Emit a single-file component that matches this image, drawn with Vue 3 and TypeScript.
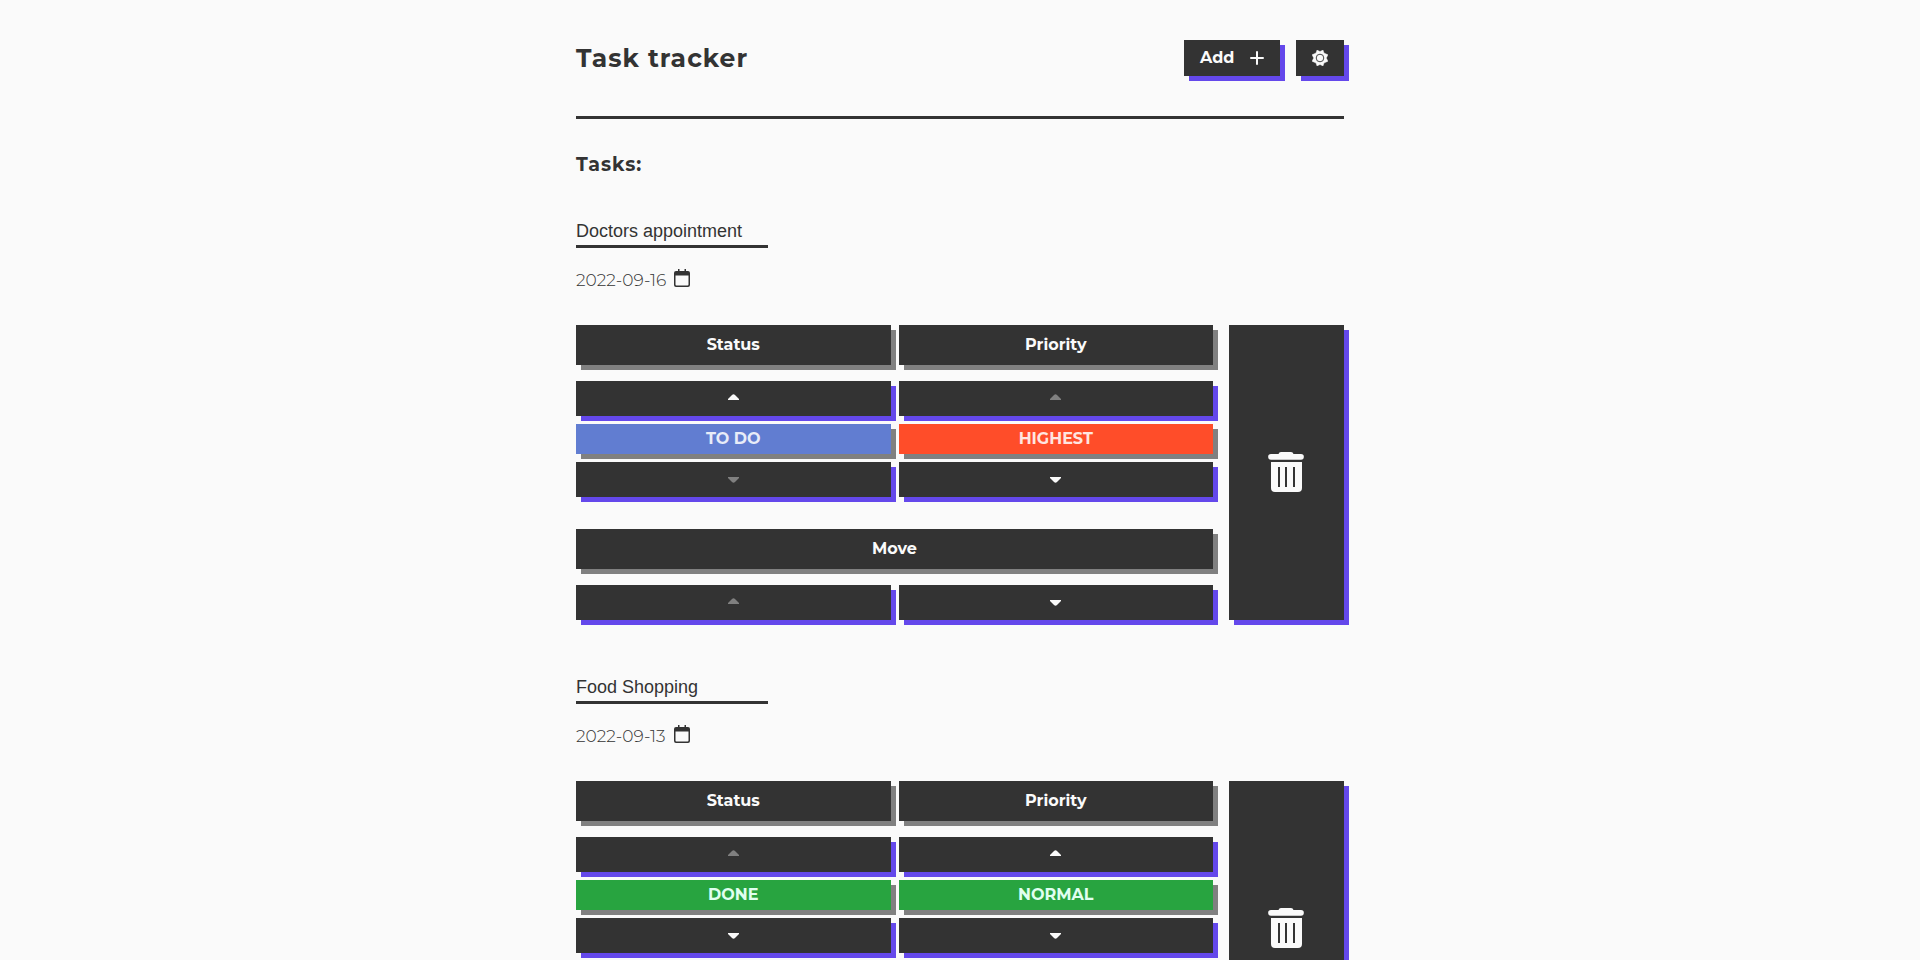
<script setup lang="ts">
import { reactive } from 'vue'

interface Level {
  label: string
  tone: string
}

interface Task {
  id: number
  title: string
  date: string
  status: Level
  priority: Level
  statusUp: boolean
  statusDown: boolean
  priorityUp: boolean
  priorityDown: boolean
}

const tasks = reactive<Task[]>([
  {
    id: 1,
    title: 'Doctors appointment',
    date: '2022-09-16',
    status: { label: 'TO DO', tone: 'blue' },
    priority: { label: 'HIGHEST', tone: 'red' },
    statusUp: true,
    statusDown: false,
    priorityUp: false,
    priorityDown: true,
  },
  {
    id: 2,
    title: 'Food Shopping',
    date: '2022-09-13',
    status: { label: 'DONE', tone: 'green' },
    priority: { label: 'NORMAL', tone: 'green' },
    statusUp: false,
    statusDown: true,
    priorityUp: true,
    priorityDown: true,
  },
])

const UP = 'M0 6V5L4 1Q5.500 -.5 7 1L11 5V6Z'
const DOWN = 'M0 2V3L4 7Q5.500 8.500 7 7L11 3V2Z'

function move(index: number, step: number): void {
  const [task] = tasks.splice(index, 1)
  tasks.splice(index + step, 0, task)
}

function remove(index: number): void {
  tasks.splice(index, 1)
}
</script>

<template>
  <div class="page">
    <header class="header">
      <h1>Task tracker</h1>
      <div class="actions">
        <button type="button" class="btn add">
          Add
          <svg width="14" height="14" viewBox="0 0 14 14" aria-hidden="true">
            <path d="M7 1v12M1 7h12" fill="none" stroke="currentColor" stroke-width="2" stroke-linecap="round" />
          </svg>
        </button>
        <button type="button" class="btn settings" aria-label="Settings">
          <svg width="16" height="16" viewBox="0 0 16 16" aria-hidden="true">
            <path
              d="M5 0 8 1.500 11 0 12 3 16 4.800 14.300 8 16 11.200 12 13 11 16 8 14.500 5 16 4 13 0 11.200 1.700 8 0 4.800 4 3Z"
              fill="currentColor"
              stroke="currentColor"
              stroke-width=".4"
              stroke-linejoin="round"
            />
            <circle cx="8" cy="8" r="3.800" fill="none" stroke="#333333" stroke-width=".9" />
          </svg>
        </button>
      </div>
    </header>

    <main>
      <h2>Tasks:</h2>
      <article v-for="(task, i) in tasks" :key="task.id" class="task">
        <input v-model="task.title" class="title" type="text" aria-label="Task title" />
        <button type="button" class="date" aria-label="Change date">
          <time :datetime="task.date">{{ task.date }}</time>
          <svg width="16" height="18" viewBox="0 0 16 18" aria-hidden="true">
            <path
              fill-rule="evenodd"
              d="M4 0h1.500v2h5V0H12v2h2q2 0 2 2v12q0 2-2 2H2q-2 0-2-2V4q0-2 2-2h2ZM1.500 6.500v9q0 1 1 1h11q1 0 1-1v-9Z"
              fill="currentColor"
            />
          </svg>
        </button>

        <div class="board">
          <div class="controls">
            <div class="pair">
              <h3 class="heading">Status</h3>
              <h3 class="heading">Priority</h3>
            </div>
            <div class="pair levels">
              <button type="button" class="btn arrow" :disabled="!task.statusUp" aria-label="Raise status">
                <svg width="11" height="9" viewBox="0 0 11 9"><path :d="UP" fill="currentColor" /></svg>
              </button>
              <button type="button" class="btn arrow" :disabled="!task.priorityUp" aria-label="Raise priority">
                <svg width="11" height="9" viewBox="0 0 11 9"><path :d="UP" fill="currentColor" /></svg>
              </button>
              <div class="level" :class="task.status.tone">{{ task.status.label }}</div>
              <div class="level" :class="task.priority.tone">{{ task.priority.label }}</div>
              <button type="button" class="btn arrow" :disabled="!task.statusDown" aria-label="Lower status">
                <svg width="11" height="9" viewBox="0 0 11 9"><path :d="DOWN" fill="currentColor" /></svg>
              </button>
              <button type="button" class="btn arrow" :disabled="!task.priorityDown" aria-label="Lower priority">
                <svg width="11" height="9" viewBox="0 0 11 9"><path :d="DOWN" fill="currentColor" /></svg>
              </button>
            </div>
            <h3 class="heading">Move</h3>
            <div class="pair">
              <button type="button" class="btn arrow" :disabled="i === 0" aria-label="Move up" @click="move(i, -1)">
                <svg width="11" height="9" viewBox="0 0 11 9"><path :d="UP" fill="currentColor" /></svg>
              </button>
              <button type="button" class="btn arrow" :disabled="i === tasks.length - 1" aria-label="Move down" @click="move(i, 1)">
                <svg width="11" height="9" viewBox="0 0 11 9"><path :d="DOWN" fill="currentColor" /></svg>
              </button>
            </div>
          </div>
          <button type="button" class="btn delete" aria-label="Delete task" @click="remove(i)">
            <svg width="37" height="41" viewBox="0 0 37 41" aria-hidden="true">
              <path d="M10.500 2Q11 0 13 0h10q2 0 2.500 2H33a2.800 2.800 0 0 1 0 5.700H3A2.800 2.800 0 0 1 3 2Z" fill="currentColor" />
              <path
                fill-rule="evenodd"
                d="M3 10h31v26q0 4-4 4h-23q-4 0-4-4ZM10 15v20h2V15ZM17 15v20h2V15ZM25 15v20h2V15Z"
                fill="currentColor"
              />
            </svg>
          </button>
        </div>
      </article>
    </main>
  </div>
</template>

<style>
body {
  margin: 0;
  background: #fafafa;
}
</style>

<style scoped>
.page {
  box-sizing: border-box;
  width: 40%;
  min-width: 480px;
  margin: 0 auto;
  padding-top: 40px;
  color: #333333;
  font-family: Montserrat, Inter, "Open Sans", sans-serif;
  font-size: 16px;
  line-height: 20px;
}

.header {
  display: flex;
  justify-content: space-between;
  align-items: flex-start;
  padding-bottom: 40px;
  border-bottom: 3px solid #333333;
}

h1,
h2,
h3 {
  margin: 0;
}

h1 {
  font-size: 25px;
  line-height: 36px;
  letter-spacing: 1px;
}

h2 {
  margin: 34px 0 40px;
  font-size: 19px;
  line-height: 24px;
  letter-spacing: 1px;
}

.actions {
  display: flex;
  gap: 16px;
}

.btn {
  display: flex;
  align-items: center;
  justify-content: center;
  box-sizing: border-box;
  border: 0;
  padding: 0;
  background: #333333;
  color: #fafafa;
  box-shadow: 5px 5px #6448eb;
  font: inherit;
  font-weight: 700;
  cursor: pointer;
}

.btn:disabled {
  color: #808080;
  cursor: default;
}

.add {
  justify-content: space-between;
  width: 96px;
  height: 36px;
  padding: 0 16px;
}

.settings {
  width: 48px;
  height: 36px;
}

.task {
  display: flex;
  flex-direction: column;
  align-items: flex-start;
  margin-bottom: 53px;
}

.title {
  box-sizing: border-box;
  width: 25%;
  height: 31px;
  padding: 0;
  border: 0;
  border-bottom: 3px solid #333333;
  background: transparent;
  color: #333333;
  font-family: "Liberation Sans", Arial, sans-serif;
  font-size: 18px;
  outline: 0;
}

.date {
  display: flex;
  align-items: flex-start;
  gap: 8px;
  margin: 21px 0 34px;
  padding: 0;
  border: 0;
  background: transparent;
  color: #333333;
  font: inherit;
  font-size: 17px;
  font-weight: 300;
  line-height: 22px;
  cursor: pointer;
}

.board {
  display: grid;
  grid-template-columns: 1fr 115px;
  gap: 16px;
  width: 100%;
}

.controls {
  display: flex;
  flex-direction: column;
  gap: 16px;
}

.pair {
  display: grid;
  grid-template-columns: 1fr 1fr;
  gap: 8px;
}

.levels {
  margin-bottom: 16px;
}

.heading {
  background: #333333;
  color: #fafafa;
  box-shadow: 5px 5px #808080;
  font-size: 16px;
  line-height: 40px;
  text-align: center;
}

.arrow {
  height: 35px;
}

.level {
  box-shadow: 5px 5px #808080;
  font-weight: 700;
  line-height: 30px;
  text-align: center;
}

.blue {
  background: #617dd1;
  color: #e8ecf8;
}

.red {
  background: #ff4d29;
  color: #ffe6e0;
}

.green {
  background: #28a440;
  color: #e0fff0;
}
</style>
